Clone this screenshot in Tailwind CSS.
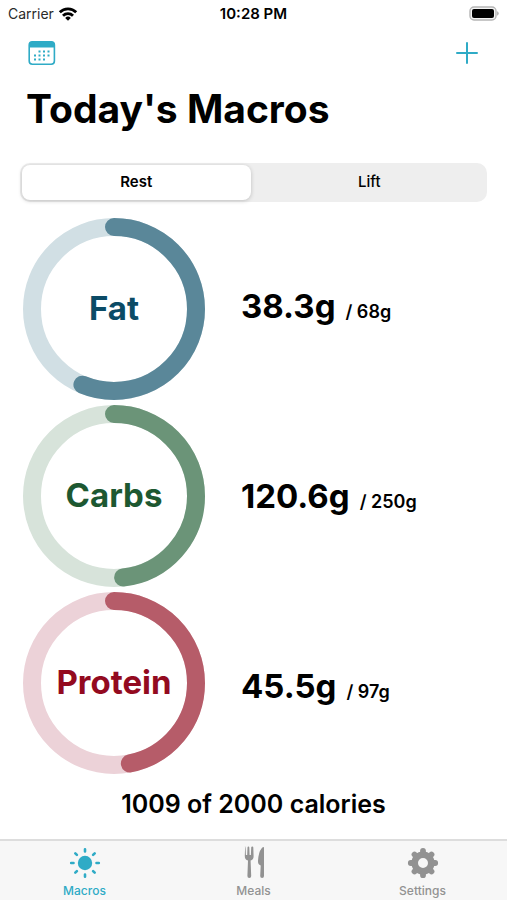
<!DOCTYPE html>
<html lang="en">
<head>
  <meta charset="UTF-8">
  <meta name="viewport" content="width=device-width, initial-scale=1.0">
  <title>Today's Macros</title>
  <script src="https://cdn.jsdelivr.net/npm/@tailwindcss/browser@4"></script>
</head>
<body class="min-h-screen flex flex-col bg-white text-black font-['Inter',sans-serif]">
  <!-- Status bar -->
  <div class="grid grid-cols-3 items-center h-7 px-2 text-sm">
    <div class="flex items-center gap-1">
      <span class="text-[#2a2a2a]">Carrier</span>
      <svg class="w-5 h-4" viewBox="0 0 20 16" fill="none" stroke="black" stroke-width="2.8">
        <path d="M1.8 6.2a11.6 11.6 0 0 1 16.4 0"/>
        <path d="M5 9.7a7.1 7.1 0 0 1 10 0"/>
        <path d="M10 14.8l-2.8-2.9a4 4 0 0 1 5.6 0z" fill="black" stroke="none"/>
      </svg>
    </div>
    <div class="text-center text-[15px] font-semibold whitespace-nowrap">10:28 PM</div>
    <svg class="w-[30px] h-4 justify-self-end" viewBox="0 0 30 16">
      <rect x="1" y="1" width="26" height="13" rx="4" fill="#f4f4f4" stroke="#b5b5b5" stroke-width="1.4"/>
      <rect x="3" y="3" width="22" height="9" rx="2" fill="black"/>
      <path d="M28.2 5.300a2.400 2.400 0 0 1 0 4.400z" fill="#a5a5a5"/>
    </svg>
  </div>

  <main class="flex-1 flex flex-col px-5">
    <div class="flex items-center justify-between h-[50px] px-2">
      <button type="button" aria-label="Calendar">
        <svg class="w-7 h-6" viewBox="0 0 28 24">
          <rect x="1.200" y="0.800" width="25.200" height="22.400" rx="3.200" fill="white" stroke="#2fabc6" stroke-width="1.600"/>
          <path d="M1 6.500V4a3.500 3.500 0 0 1 3.500-3.500h18.500a3.500 3.500 0 0 1 3.500 3.500v2.500z" fill="#2fabc6"/>
          <path d="M10.500 10.500h2m2.500 0h2m2.500 0h2M6 14.500h2m2.500 0h2m2.500 0h2m2.500 0h2M6 18.500h2m2.500 0h2m2.500 0h2" stroke="#2fabc6" stroke-width="2"/>
        </svg>
      </button>
      <button type="button" aria-label="Add">
        <svg class="w-6 h-6" viewBox="0 0 24 24" stroke="#2fabc6" stroke-width="2" stroke-linecap="round">
          <path d="M12 2v20M2 12h20"/>
        </svg>
      </button>
    </div>

    <h1 class="px-[6px] pt-2 text-[39px] leading-[46px] font-bold">Today's Macros</h1>

    <!-- Day type -->
    <div class="mt-[31px] grid grid-cols-2 h-[39px] p-[2px] rounded-[10px] bg-[#eeeeee] text-[15px]">
      <button type="button" aria-pressed="true" class="mr-[3px] rounded-[8px] bg-white font-semibold shadow-[0_1px_4px_rgba(0,0,0,0.2)]">Rest</button>
      <button type="button" aria-pressed="false" class="font-medium">Lift</button>
    </div>

    <!-- Rings start at 12 o'clock, pathLength makes the dash a percentage -->
    <div class="mt-4 flex gap-9 pl-[3px]">
      <div class="flex flex-col gap-[5px] text-[33px] font-bold">
        <div class="grid place-items-center *:col-start-1 *:row-start-1">
          <svg class="size-[182px] -rotate-90" viewBox="0 0 182 182" fill="none" stroke-width="18">
            <circle cx="91" cy="91" r="82" stroke="#d1dfe4"/>
            <circle cx="91" cy="91" r="82" stroke="#5a8799" stroke-linecap="round" pathLength="100" stroke-dasharray="56.3 100"/>
          </svg>
          <span class="text-[#0b4b66]">Fat</span>
        </div>
        <div class="grid place-items-center *:col-start-1 *:row-start-1">
          <svg class="size-[182px] -rotate-90" viewBox="0 0 182 182" fill="none" stroke-width="18">
            <circle cx="91" cy="91" r="82" stroke="#d7e3da"/>
            <circle cx="91" cy="91" r="82" stroke="#6b9478" stroke-linecap="round" pathLength="100" stroke-dasharray="48.2 100"/>
          </svg>
          <span class="text-[#1d5831]">Carbs</span>
        </div>
        <div class="grid place-items-center *:col-start-1 *:row-start-1">
          <svg class="size-[182px] -rotate-90" viewBox="0 0 182 182" fill="none" stroke-width="18">
            <circle cx="91" cy="91" r="82" stroke="#ecd2d8"/>
            <circle cx="91" cy="91" r="82" stroke="#b65c69" stroke-linecap="round" pathLength="100" stroke-dasharray="46.9 100"/>
          </svg>
          <span class="text-[#930a20]">Protein</span>
        </div>
      </div>
      <div class="flex flex-col justify-between py-16 whitespace-nowrap">
        <p class="flex items-baseline gap-[10px] leading-12"><span class="text-[33px] font-bold">38.3g</span><span class="text-lg font-semibold">/ 68g</span></p>
        <p class="flex items-baseline gap-[10px] leading-12"><span class="text-[33px] font-bold">120.6g</span><span class="text-lg font-semibold">/ 250g</span></p>
        <p class="flex items-baseline gap-[10px] leading-12"><span class="text-[33px] font-bold">45.5g</span><span class="text-lg font-semibold">/ 97g</span></p>
      </div>
    </div>

    <p class="my-3 text-center text-[25px] leading-9 font-semibold">1009 of 2000 calories</p>
  </main>

  <nav class="grid grid-cols-3 h-[61px] border-t-2 border-[#dddddd] bg-[#f7f7f7] text-xs font-medium text-[#929292]">
    <a href="#macros" class="flex flex-col items-center gap-[2px] pt-1 text-[#2fabc6]">
      <svg class="size-9" viewBox="0 0 36 36" stroke="currentColor" stroke-width="2.600" stroke-linecap="round">
        <circle cx="18" cy="18" r="7.200" fill="currentColor" stroke="none"/>
        <path d="M18 4.200v2.300M18 29.500v2.300M4.200 18h2.300M29.500 18h2.300M8.300 8.300l1.600 1.600M26.100 26.100l1.600 1.600M8.300 27.700l1.600-1.600M26.100 9.900l1.600-1.600"/>
      </svg>
      Macros
    </a>
    <a href="#meals" class="flex flex-col items-center gap-[2px] pt-1">
      <svg class="size-9" viewBox="0 0 36 36" fill="currentColor">
        <path d="M8.500 1.500q1 0 1.100 1l.3 7.500h1.300l.3-7.500q.1-1 .9-1t.9 1l.3 7.500h1.300l.3-7.500q.1-1 1.100-1t1 1l.3 8.500q.1 3.600-3 4.600l.6 15.400q0 2-1.900 2t-1.900-2l.6-15.400q-3.300-1-3.200-4.600l.3-8.500q.1-1 .7-1z"/>
        <path d="M28 3v28q0 2-1.900 2t-1.900-2l.5-10.500q-2.900-1-2.700-4.500.5-9 3.500-12.500 2.500-2.500 2.500-.5z"/>
      </svg>
      Meals
    </a>
    <a href="#settings" class="flex flex-col items-center gap-[2px] pt-1">
      <svg class="size-9" viewBox="0 0 36 36" fill="none" stroke="currentColor">
        <circle cx="18" cy="18" r="8.300" stroke-width="6.600"/>
        <path d="M18 6.800V5.800M18 29.200v1M6.800 18h-1M29.200 18h1M10.100 10.100l-.6-.6M25.900 25.900l.6.6M10.100 25.900l-.6.6M25.900 10.100l.6-.6" stroke-width="5.800" stroke-linecap="round"/>
      </svg>
      Settings
    </a>
  </nav>
</body>
</html>
